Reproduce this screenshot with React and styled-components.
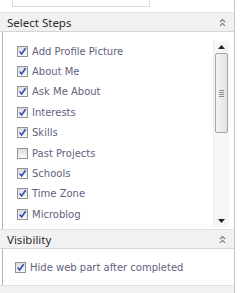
import styled, { createGlobalStyle } from "styled-components";

const GlobalStyle = createGlobalStyle`
  html, body {
    margin: 0;
    padding: 0;
    background: #ffffff;
  }
  body {
    font-family: "DejaVu Sans", Verdana, sans-serif;
  }
`;

const Frame = styled.div`
  width: 234px;
  height: 293px;
  border-right: 1px solid #c4c4c4;
  overflow: hidden;
  display: flex;
  flex-direction: column;
`;

const TopStub = styled.div`
  margin-left: 12px;
  width: 136px;
  height: 6px;
  border: 1px solid #dcdcdc;
  border-top: none;
  flex-shrink: 0;
`;

const Header = styled.div`
  flex-shrink: 0;
  height: 18px;
  margin-top: ${(p) => p.$gap || 0}px;
  display: flex;
  align-items: center;
  justify-content: space-between;
  padding: 0 8px 0 7px;
  background: #f1f1f1;
  border-top: 1px solid #e0e0e0;
  border-bottom: 1px solid #d6d6d6;
  font-family: "Noto Sans", "Open Sans", sans-serif;
  font-size: 11.5px;
  color: #2c2c2c;
`;

const Body = styled.div`
  flex-shrink: 0;
  height: ${(p) => p.$h}px;
  margin-left: 2px;
  border-left: 1px solid #b4b4b4;
  box-sizing: border-box;
  padding-top: ${(p) => p.$top}px;
`;

const ListBox = styled.div`
  display: flex;
  margin-left: 11px;
  width: 215px;
  height: 186px;
`;

const Items = styled.div`
  flex: 1;
  display: flex;
  flex-direction: column;
`;

const Row = styled.label`
  display: flex;
  align-items: center;
  height: ${(p) => p.$h || 20.4}px;
  padding-left: ${(p) => p.$indent || 3}px;
  gap: 4px;
  font-size: 10px;
  color: #62627c;
  white-space: nowrap;
`;

const Box = styled.span`
  width: 9px;
  height: 9px;
  border: 1px solid #939393;
  background: linear-gradient(#dcdcdc, #fafafa);
  display: flex;
  align-items: center;
  justify-content: center;
  flex-shrink: 0;
`;

const Scroll = styled.div`
  width: 15px;
  display: flex;
  flex-direction: column;
  background: #f6f6f6;
  border-left: 1px solid #ececec;
`;

const Arrow = styled.div`
  height: 12px;
  display: flex;
  align-items: center;
  justify-content: center;
  flex-shrink: 0;
`;

const Thumb = styled.div`
  height: 78px;
  margin: 0 1px;
  border: 1px solid #a6a6a6;
  border-radius: 2px;
  background: linear-gradient(90deg, #f4f4f4, #e2e2e2);
  display: flex;
  flex-direction: column;
  align-items: center;
  justify-content: center;
  gap: 1px;
`;

const Grip = styled.span`
  width: 5px;
  height: 1px;
  background: #8a8a8a;
`;

const Track = styled.div`
  flex: 1;
`;

function Check({ on }) {
  return (
    <Box>
      {on && (
        <svg width="9" height="9" viewBox="0 0 9 9">
          <path d="M1.6 4.6 L3.6 7 L7.6 1.3" fill="none" stroke="#2d47b8" strokeWidth="1.5" />
        </svg>
      )}
    </Box>
  );
}

function Chevrons() {
  return (
    <svg width="7" height="9" viewBox="0 0 7 9">
      <path d="M1 4 L3.5 1.5 L6 4 M1 7.8 L3.5 5.3 L6 7.8" fill="none" stroke="#7a7a7a" strokeWidth="1.1" />
    </svg>
  );
}

const steps = [
  ["Add Profile Picture", true],
  ["About Me", true],
  ["Ask Me About", true],
  ["Interests", true],
  ["Skills", true],
  ["Past Projects", false],
  ["Schools", true],
  ["Time Zone", true],
  ["Microblog", true],
];

export default function App() {
  return (
    <>
      <GlobalStyle />
      <Frame>
        <TopStub />
        <Header $gap={5}>
          <span>Select Steps</span>
          <Chevrons />
        </Header>
        <Body $h={197} $top={9}>
          <ListBox>
            <Items>
              {steps.map(([name, on]) => (
                <Row key={name}>
                  <Check on={on} />
                  {name}
                </Row>
              ))}
            </Items>
            <Scroll>
              <Arrow>
                <svg width="7" height="4" viewBox="0 0 7 4">
                  <path d="M0 4 L3.5 0 L7 4 Z" fill="#222" />
                </svg>
              </Arrow>
              <Thumb>
                <Grip />
                <Grip />
                <Grip />
                <Grip />
              </Thumb>
              <Track />
              <Arrow>
                <svg width="7" height="4" viewBox="0 0 7 4">
                  <path d="M0 0 L3.5 4 L7 0 Z" fill="#222" />
                </svg>
              </Arrow>
            </Scroll>
          </ListBox>
        </Body>
        <Header>
          <span>Visibility</span>
          <Chevrons />
        </Header>
        <Body $h={36} $top={8}>
          <Row $indent={12} $h={20}>
            <Check on />
            Hide web part after completed
          </Row>
        </Body>
        <Header />
      </Frame>
    </>
  );
}
